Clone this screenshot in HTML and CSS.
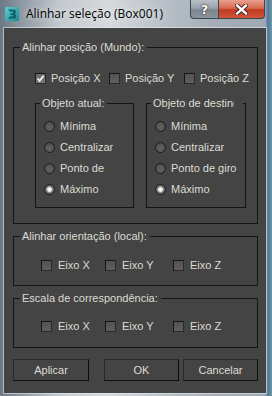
FILE: index.html
```html
<!DOCTYPE html>
<html lang="pt">

<head>
    <meta charset="UTF-8">
    <title>Alinhar seleção (Box001)</title>
    <link rel="stylesheet" href="styles.css">
</head>

<body>
    <div class="window">
        <div class="titlebar">
            <svg class="app-icon" width="14" height="14" viewBox="0 0 14 14">
                <defs>
                    <linearGradient id="tealBg" x1="0" y1="0" x2="1" y2="1">
                        <stop offset="0" stop-color="#5fd0d0"/>
                        <stop offset="1" stop-color="#1a8a92"/>
                    </linearGradient>
                </defs>
                <rect x="0" y="0" width="14" height="14" rx="1.5" fill="url(#tealBg)"/>
                <path d="M3 2.5 L8 2.5 Q11 2.5 11 5 Q11 6.6 9.4 7 Q11.2 7.5 11.2 9.3 Q11.2 11.6 8 11.6 L3 11.6 L5 9.6 L7.6 9.6 Q8.6 9.6 8.6 8.8 Q8.6 8 7.6 8 L5.6 8 L5.6 6.2 L7.4 6.2 Q8.4 6.2 8.4 5.4 Q8.4 4.6 7.4 4.6 L5 4.6 Z" fill="#0d5f68"/>
            </svg>
            <span class="title">Alinhar seleção (Box001)</span>
            <div class="caption-buttons">
                <span class="cap-btn help">?</span>
                <span class="cap-btn close">
                    <svg width="13" height="11" viewBox="0 0 13 11">
                        <path d="M2 1.5 L11 9.5 M11 1.5 L2 9.5" stroke="#3a1a14" stroke-width="4.2" stroke-linecap="square"/>
                        <path d="M2 1.5 L11 9.5 M11 1.5 L2 9.5" stroke="#ffffff" stroke-width="2.4" stroke-linecap="square"/>
                    </svg>
                </span>
            </div>
        </div>

        <div class="client">
            <fieldset class="group">
                <legend class="legend-main">Alinhar posição (Mundo):</legend>
                <div class="group-body pos-body">
                    <div class="check-row pos-row">
                        <div class="check pos-x">
                            <span class="box checked">
                                <svg width="9" height="9" viewBox="0 0 9 9">
                                    <path d="M1.5 4.5 L3.6 6.8 L7.6 1.8" stroke="#f4f4f4" stroke-width="1.8" fill="none"/>
                                </svg>
                            </span>Posição X
                        </div>
                        <div class="check pos-y"><span class="box"></span>Posição Y</div>
                        <div class="check"><span class="box"></span>Posição Z</div>
                    </div>

                    <div class="subgroups">
                        <fieldset class="group sub sub-left">
                            <legend class="legend-sub">Objeto atual:</legend>
                            <div class="radio-list">
                                <div class="radio"><span class="dot"></span>Mínima</div>
                                <div class="radio"><span class="dot"></span>Centralizar</div>
                                <div class="radio"><span class="dot"></span>Ponto de</div>
                                <div class="radio"><span class="dot selected"></span>Máximo</div>
                            </div>
                        </fieldset>
                        <fieldset class="group sub sub-right">
                            <legend class="legend-sub legend-clip"><span>Objeto de destino</span></legend>
                            <div class="radio-list">
                                <div class="radio"><span class="dot"></span>Mínima</div>
                                <div class="radio"><span class="dot"></span>Centralizar</div>
                                <div class="radio"><span class="dot"></span>Ponto de giro</div>
                                <div class="radio"><span class="dot selected"></span>Máximo</div>
                            </div>
                        </fieldset>
                    </div>
                </div>
            </fieldset>

            <fieldset class="group next">
                <legend class="legend-main">Alinhar orientação (local):</legend>
                <div class="group-body axis-body orient-body">
                    <div class="check-row">
                        <div class="check axis-x"><span class="box"></span>Eixo X</div>
                        <div class="check axis-y"><span class="box"></span>Eixo Y</div>
                        <div class="check"><span class="box"></span>Eixo Z</div>
                    </div>
                </div>
            </fieldset>

            <fieldset class="group next">
                <legend class="legend-main">Escala de correspondência:</legend>
                <div class="group-body axis-body scale-body">
                    <div class="check-row">
                        <div class="check axis-x"><span class="box"></span>Eixo X</div>
                        <div class="check axis-y"><span class="box"></span>Eixo Y</div>
                        <div class="check"><span class="box"></span>Eixo Z</div>
                    </div>
                </div>
            </fieldset>

            <div class="buttons">
                <button class="btn btn-apply">Aplicar</button>
                <button class="btn btn-ok">OK</button>
                <button class="btn btn-cancel">Cancelar</button>
            </div>
        </div>
    </div>
</body>

</html>
```

FILE: styles.css
```css
body {
    margin: 0;
    padding: 0;
    background-color: #3d6a80;
}

.window {
    width: 272px;
    height: 396px;
    box-sizing: border-box;
    background:
        linear-gradient(to right, rgba(0, 0, 0, 0) 97.5%, #4f78a0 98.5%, #6e9a9c 100%),
        linear-gradient(to right, #6c7884 0%, #8e99a4 8%, #c4c9ce 22%, #d6d9dc 40%, #b9c0c7 60%, #a4adb6 80%, #9ea9b3 100%);
    font-family: "Liberation Sans", Arial, sans-serif;
}

/* Title bar */

.titlebar {
    height: 28px;
    display: flex;
    align-items: flex-start;
    padding-left: 5px;
    box-sizing: border-box;
}

.app-icon {
    margin-top: 7px;
    flex-shrink: 0;
}

.title {
    margin-left: 7px;
    margin-top: 7px;
    font-family: "Open Sans", "Liberation Sans", sans-serif;
    font-size: 12px;
    line-height: 14px;
    color: #000;
    white-space: nowrap;
    text-shadow: 0 0 6px rgba(255, 255, 255, 0.9);
}

.caption-buttons {
    margin-left: auto;
    margin-right: 7px;
    display: flex;
}

.cap-btn {
    height: 19px;
    box-sizing: border-box;
    display: flex;
    align-items: center;
    justify-content: center;
    border: 1px solid #3c4650;
    border-top: none;
}

.help {
    width: 28px;
    border-radius: 0 0 0 4px;
    border-right: none;
    background: linear-gradient(#b9c0c6 0%, #9aa2aa 45%, #7c858e 55%, #8c959d 100%);
    color: #fff;
    font-family: "DejaVu Sans", sans-serif;
    font-weight: bold;
    font-size: 13px;
    text-shadow: 0 0 2px #222, 0 0 1px #222;
}

.close {
    width: 47px;
    border-radius: 0 0 4px 0;
    background: linear-gradient(#e8a090 0%, #d86a52 45%, #c03a20 55%, #d2553a 100%);
}

/* Client area */

.client {
    margin: 0 6px 0 4px;
    height: 365px;
    box-sizing: border-box;
    padding: 13px 8px 0 9px;
    background-color: #444444;
    box-shadow: 0 0 0 1px rgba(235, 240, 245, 0.55);
    font-size: 11px;
    line-height: 13px;
    color: #dcdcd4;
}

.group {
    margin: 0;
    padding: 0;
    border: 1px solid #151515;
    min-width: 0;
}

.group.next {
    margin-top: 6px;
}

legend {
    padding: 0 3px 0 2px;
    font-size: 11px;
    line-height: 13px;
    white-space: nowrap;
}

.legend-main {
    margin-left: 6px;
}

.legend-sub {
    margin-left: 4px;
}

.legend-clip {
    padding-right: 9px;
}

.legend-clip span {
    display: block;
    width: 81px;
    overflow: hidden;
}

.group-body {
    padding-left: 21px;
}

.pos-body {
    padding-top: 18px;
    padding-bottom: 15px;
}

.check-row {
    display: flex;
    height: 13px;
    align-items: center;
}

.check {
    display: flex;
    align-items: center;
    white-space: nowrap;
}

.box {
    width: 11px;
    height: 11px;
    box-sizing: border-box;
    margin-right: 5px;
    border: 1px solid #161616;
    border-right-color: #2a2a2a;
    border-bottom-color: #2a2a2a;
    background: linear-gradient(#535353, #5e5e5e);
    display: flex;
    align-items: center;
    justify-content: center;
}

.box.checked {
    background: linear-gradient(#6a6a6a, #7a7a7a);
}

.pos-x {
    width: 74px;
}

.pos-y {
    width: 75px;
}

/* Sub groups with radio buttons */

.subgroups {
    display: flex;
    gap: 12px;
    margin-top: 12px;
}

.sub-left {
    width: 99px;
    box-sizing: border-box;
}

.sub-right {
    width: 100px;
    box-sizing: border-box;
}

.radio-list {
    padding: 6px 0 7px 8px;
}

.radio {
    height: 21px;
    display: flex;
    align-items: center;
    white-space: nowrap;
}

.dot {
    width: 11px;
    height: 11px;
    box-sizing: border-box;
    margin-right: 5px;
    border-radius: 50%;
    border: 1px solid #1c1c1c;
    background: radial-gradient(circle at 50% 60%, #626262 0%, #555555 55%, #3a3a3a 100%);
}

.dot.selected {
    background: radial-gradient(circle at 50% 50%, #ffffff 0%, #f0f0f0 30%, #8a8a8a 45%, #505050 80%);
}

/* Axis rows */

.axis-body {
    padding-left: 27px;
}

.axis-body .box {
    margin-right: 6px;
}

.orient-body {
    padding-top: 16px;
    padding-bottom: 13px;
}

.scale-body {
    padding-top: 15px;
    padding-bottom: 14px;
}

.axis-x {
    width: 64px;
}

.axis-y {
    width: 68px;
}

/* Bottom buttons */

.buttons {
    display: flex;
    margin-top: 11px;
}

.btn {
    height: 22px;
    padding: 0;
    box-sizing: border-box;
    background-color: #444444;
    border: 1px solid #2a2a2a;
    border-right-color: #0e0e0e;
    border-bottom-color: #0e0e0e;
    color: #dcdcd4;
    font-family: "Liberation Sans", Arial, sans-serif;
    font-size: 11px;
}

.btn-apply {
    width: 76px;
}

.btn-ok {
    width: 75px;
    margin-left: 15px;
}

.btn-cancel {
    width: 75px;
    margin-left: 4px;
}
```
